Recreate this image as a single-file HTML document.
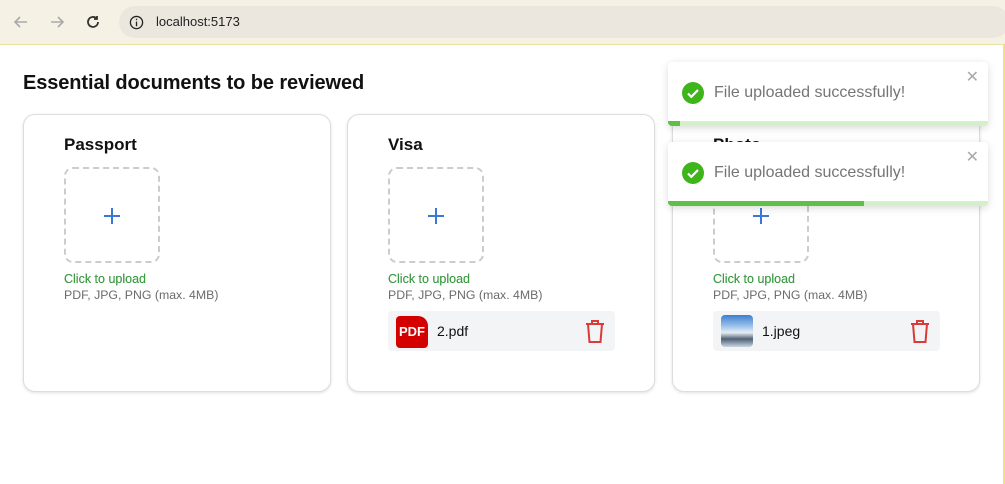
<!DOCTYPE html>
<html><head><meta charset="utf-8"><style>
*{box-sizing:border-box;margin:0;padding:0}
body{width:1005px;height:484px;overflow:hidden;background:#fff;font-family:"Liberation Sans",Arial,sans-serif;position:relative}
.bar{position:absolute;left:0;top:0;width:1005px;height:45px;background:#f5f1e4;border-bottom:1px solid #e8dfa0}
.url{position:absolute;left:119px;top:6px;width:890px;height:32px;border-radius:16px;background:#ebe7df}
.url span{position:absolute;left:37px;top:8px;font-size:13px;color:#222}
.yl{position:absolute;right:0;top:45px;width:2px;height:439px;background:#f3e07a}
h1{position:absolute;left:23px;top:72px;font-size:20px;font-weight:bold;color:#111;letter-spacing:-0.1px}
.card{position:absolute;top:114px;width:308px;height:278px;border:1px solid #ddd;border-radius:12px;box-shadow:0 1px 3px rgba(0,0,0,.12);background:#fff}
.card h2{position:absolute;left:40px;top:20px;font-size:17px;font-weight:bold;color:#111}
.box{position:absolute;left:40px;top:52px;width:96px;height:96px;border:2px dashed #ccc;border-radius:9px}
.box:before{content:"";position:absolute;left:38px;top:46px;width:16px;height:2px;background:#3a78d8}
.box:after{content:"";position:absolute;left:45px;top:39px;width:2px;height:16px;background:#3a78d8}
.cl{position:absolute;left:40px;top:157px;font-size:12.5px;color:#3e9c45;font-weight:bold;-webkit-text-stroke:0}
.cl{font-weight:normal;text-shadow:0 0 0.3px #3e9c45}
.fm{position:absolute;left:40px;top:173px;font-size:12.3px;color:#6b6b6b}
.row{position:absolute;left:40px;top:196px;width:227px;height:40px;background:#f3f4f6;border-radius:4px}
.row .nm{position:absolute;left:49px;top:12px;font-size:14px;color:#111}
.pdf{position:absolute;left:8px;top:5px;width:32px;height:32px;background:#d40000;border-radius:4px 10px 4px 4px;color:#fff;font-weight:bold;font-size:13px;line-height:32px;text-align:center}
.img{position:absolute;left:8px;top:4px;width:32px;height:32px;border-radius:4px;background:linear-gradient(#3b7ed0 0,#9cc3ea 35%,#e6eef5 55%,#4f6175 75%,#c9d6e2 100%)}
.del{position:absolute;left:196px;top:8px}
.toast{position:absolute;left:668px;width:320px;height:64px;background:#fff;border-radius:4px;box-shadow:0 2px 8px rgba(0,0,0,.15);overflow:hidden}
.toast .ic{position:absolute;left:14px;top:20px}
.toast .t{position:absolute;left:46px;top:22px;font-size:16px;color:#757575}
.toast .x{position:absolute;right:9px;top:5px;font-size:16px;color:#aaa}
.toast .pb{position:absolute;left:0;bottom:0;height:5px;width:100%;background:#d4f0c8}
.toast .pf{position:absolute;left:0;bottom:0;height:5px;background:#5ec143}
</style></head><body>
<div class="bar">
<svg style="position:absolute;left:13px;top:14px" width="16" height="16" viewBox="0 0 16 16" fill="none" stroke="#aaa" stroke-width="1.6"><path d="M14 8H2M7 3L2 8l5 5"/></svg>
<svg style="position:absolute;left:49px;top:14px" width="16" height="16" viewBox="0 0 16 16" fill="none" stroke="#aaa" stroke-width="1.6"><path d="M2 8h12M9 3l5 5-5 5"/></svg>
<svg style="position:absolute;left:85px;top:14px" width="16" height="16" viewBox="0 0 16 16" fill="none" stroke="#333" stroke-width="1.8"><path d="M13 8a5 5 0 1 1-1.5-3.6"/><path d="M12 2v3H9" /></svg>
<div class="url"><svg style="position:absolute;left:10px;top:9px" width="15" height="15" viewBox="0 0 16 16"><circle cx="8" cy="8" r="6.5" fill="none" stroke="#222" stroke-width="1.4"/><rect x="7.3" y="7" width="1.4" height="5" fill="#222"/><rect x="7.3" y="4" width="1.4" height="1.5" fill="#222"/></svg><span>localhost:5173</span></div>
</div>
<div class="yl"></div>
<h1>Essential documents to be reviewed</h1>

<div class="card" style="left:23px"><h2>Passport</h2><div class="box"></div><div class="cl">Click to upload</div><div class="fm">PDF, JPG, PNG (max. 4MB)</div></div>

<div class="card" style="left:347px"><h2>Visa</h2><div class="box"></div><div class="cl">Click to upload</div><div class="fm">PDF, JPG, PNG (max. 4MB)</div>
<div class="row"><div class="pdf">PDF</div><span class="nm">2.pdf</span>
<svg class="del" width="22" height="25" viewBox="0 0 22 25" fill="none" stroke="#d93a3a" stroke-width="2"><path d="M2 5h18M8 5V2h6v3M4 5l1.5 18h11L18 5"/></svg></div></div>

<div class="card" style="left:672px"><h2>Photo</h2><div class="box"></div><div class="cl">Click to upload</div><div class="fm">PDF, JPG, PNG (max. 4MB)</div>
<div class="row"><div class="img"></div><span class="nm">1.jpeg</span>
<svg class="del" width="22" height="25" viewBox="0 0 22 25" fill="none" stroke="#d93a3a" stroke-width="2"><path d="M2 5h18M8 5V2h6v3M4 5l1.5 18h11L18 5"/></svg></div></div>

<div class="toast" style="top:62px"><svg class="ic" width="22" height="22" viewBox="0 0 22 22"><circle cx="11" cy="11" r="11" fill="#3fb51c"/><path d="M6 11.5l3.3 3.3L16 8" fill="none" stroke="#fff" stroke-width="2.2"/></svg><span class="t">File uploaded successfully!</span><span class="x">✕</span><div class="pb"></div><div class="pf" style="width:12px"></div></div>
<div class="toast" style="top:142px"><svg class="ic" width="22" height="22" viewBox="0 0 22 22"><circle cx="11" cy="11" r="11" fill="#3fb51c"/><path d="M6 11.5l3.3 3.3L16 8" fill="none" stroke="#fff" stroke-width="2.2"/></svg><span class="t">File uploaded successfully!</span><span class="x">✕</span><div class="pb"></div><div class="pf" style="width:196px"></div></div>
</body></html>
